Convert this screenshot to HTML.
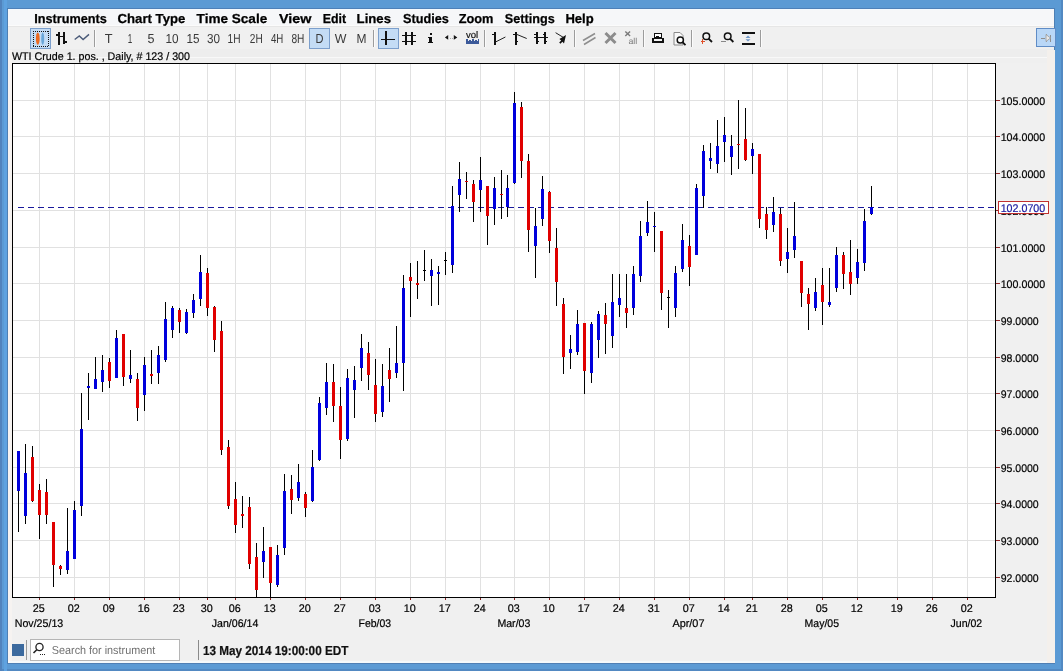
<!DOCTYPE html>
<html><head><meta charset="utf-8"><title>Chart</title>
<style>html,body{margin:0;padding:0;width:1063px;height:671px;overflow:hidden;background:#5b9ad4}svg{display:block;will-change:transform}text{shape-rendering:auto}</style>
</head><body><svg width="1063" height="671" viewBox="0 0 1063 671" font-family='"Liberation Sans", sans-serif' shape-rendering="crispEdges" text-rendering="geometricPrecision"><rect x="0" y="0" width="1063" height="671" fill="#5b9ad4"/><rect x="8" y="8" width="1047" height="1" fill="#4d80b8"/><rect x="8" y="9" width="1047" height="654" fill="#f0f0f0"/><rect x="8" y="663" width="1047" height="1" fill="#4f7fb4"/><rect x="0" y="669" width="1063" height="2" fill="#5289c2"/><rect x="1061" y="0" width="2" height="671" fill="#5289c2"/><rect x="8" y="661" width="1047" height="2" fill="#f4f8fa"/><defs><linearGradient id="mb" x1="0" y1="0" x2="0" y2="1"><stop offset="0" stop-color="#fbfcfd"/><stop offset="1" stop-color="#f3f4f6"/></linearGradient><linearGradient id="tb" x1="0" y1="0" x2="0" y2="1"><stop offset="0" stop-color="#ebebeb"/><stop offset="0.3" stop-color="#f0f0f0"/><stop offset="1" stop-color="#ededed"/></linearGradient></defs><rect x="8" y="9" width="1047" height="1" fill="#f4f9fd"/><rect x="8" y="10" width="1047" height="15" fill="#f6f7f9"/><rect x="8" y="25" width="1047" height="1" fill="#fbfbfb"/><rect x="8" y="26" width="1047" height="1" fill="#e6e6e6"/><rect x="8" y="27" width="1047" height="22" fill="#f0f0f0"/><rect x="8" y="49" width="1047" height="8" fill="#ededed"/><rect x="8" y="57" width="1047" height="1" fill="#f8f8f8"/><rect x="8" y="58" width="1047" height="5" fill="#efefef"/><rect x="0" y="0" width="2" height="671" fill="#5183bd"/><rect x="4" y="0" width="3" height="671" fill="#5ea2e0"/><rect x="7" y="8" width="1" height="656" fill="#4d7fb4"/><rect x="1054" y="8" width="1" height="656" fill="#4d7fb4"/><rect x="1047" y="50" width="8" height="613" fill="#f4f0ec"/><rect x="8" y="50" width="4" height="611" fill="#f6f3f1"/><text x="34.3" y="22.6" font-size="13" font-weight="bold" fill="#000" text-anchor="start" textLength="72.6" lengthAdjust="spacingAndGlyphs" stroke="#000" stroke-width="0.25">Instruments</text><text x="117.6" y="22.6" font-size="13" font-weight="bold" fill="#000" text-anchor="start" textLength="67.7" lengthAdjust="spacingAndGlyphs" stroke="#000" stroke-width="0.25">Chart Type</text><text x="196.6" y="22.6" font-size="13" font-weight="bold" fill="#000" text-anchor="start" textLength="70.6" lengthAdjust="spacingAndGlyphs" stroke="#000" stroke-width="0.25">Time Scale</text><text x="279" y="22.6" font-size="13" font-weight="bold" fill="#000" text-anchor="start" textLength="32.5" lengthAdjust="spacingAndGlyphs" stroke="#000" stroke-width="0.25">View</text><text x="322.7" y="22.6" font-size="13" font-weight="bold" fill="#000" text-anchor="start" textLength="23.4" lengthAdjust="spacingAndGlyphs" stroke="#000" stroke-width="0.25">Edit</text><text x="356.6" y="22.6" font-size="13" font-weight="bold" fill="#000" text-anchor="start" textLength="34.4" lengthAdjust="spacingAndGlyphs" stroke="#000" stroke-width="0.25">Lines</text><text x="403.1" y="22.6" font-size="13" font-weight="bold" fill="#000" text-anchor="start" textLength="45.8" lengthAdjust="spacingAndGlyphs" stroke="#000" stroke-width="0.25">Studies</text><text x="458.7" y="22.6" font-size="13" font-weight="bold" fill="#000" text-anchor="start" textLength="34.8" lengthAdjust="spacingAndGlyphs" stroke="#000" stroke-width="0.25">Zoom</text><text x="504.8" y="22.6" font-size="13" font-weight="bold" fill="#000" text-anchor="start" textLength="49.9" lengthAdjust="spacingAndGlyphs" stroke="#000" stroke-width="0.25">Settings</text><text x="565.4" y="22.6" font-size="13" font-weight="bold" fill="#000" text-anchor="start" textLength="28.3" lengthAdjust="spacingAndGlyphs" stroke="#000" stroke-width="0.25">Help</text><rect x="30.5" y="28.5" width="20" height="20" fill="#c4dcf5" stroke="#7c9fcc" stroke-width="1"/><path d="M33 31h1v1h-1z M33 46h1v1h-1z M35 31h1v1h-1z M35 46h1v1h-1z M37 31h1v1h-1z M37 46h1v1h-1z M39 31h1v1h-1z M39 46h1v1h-1z M41 31h1v1h-1z M41 46h1v1h-1z M43 31h1v1h-1z M43 46h1v1h-1z M45 31h1v1h-1z M45 46h1v1h-1z M47 31h1v1h-1z M47 46h1v1h-1z M33 31h1v1h-1z M48 31h1v1h-1z M33 33h1v1h-1z M48 33h1v1h-1z M33 35h1v1h-1z M48 35h1v1h-1z M33 37h1v1h-1z M48 37h1v1h-1z M33 39h1v1h-1z M48 39h1v1h-1z M33 41h1v1h-1z M48 41h1v1h-1z M33 43h1v1h-1z M48 43h1v1h-1z M33 45h1v1h-1z M48 45h1v1h-1z" fill="#111"/><g shape-rendering="auto"><ellipse cx="37.8" cy="38.7" rx="1.9" ry="6.2" fill="#ec6a22"/><ellipse cx="42.7" cy="38.7" rx="1.5" ry="6.2" fill="#6aa6d8"/></g><path d="M58 32h1.5v12.5h-1.5z M56 34h2v1.5h-2z M59 35.5h4v1.2h-4z M63 31.5h1.5v12.5h-1.5z M64.5 41h2v1.5h-2z" fill="#111"/><path d="M74.7 39.5L79.3 36 83.1 39.6 89 34.4" stroke="#4a5a78" stroke-width="1.4" fill="none" shape-rendering="auto"/><rect x="94" y="30" width="1" height="17" fill="#9c9c9c"/><rect x="95" y="30" width="1" height="17" fill="#fbfbfb"/><rect x="309.5" y="28.5" width="20" height="20" fill="#c4dcf5" stroke="#7c9fcc" stroke-width="1"/><text x="104.8" y="42.6" font-size="13" font-weight="normal" fill="#3a3a3a" text-anchor="start" textLength="7.8" lengthAdjust="spacingAndGlyphs" >T</text><text x="127.8" y="42.6" font-size="13" font-weight="normal" fill="#3a3a3a" text-anchor="start" textLength="4.5" lengthAdjust="spacingAndGlyphs" >1</text><text x="147.6" y="42.6" font-size="13" font-weight="normal" fill="#3a3a3a" text-anchor="start" textLength="7" lengthAdjust="spacingAndGlyphs" >5</text><text x="165.5" y="42.6" font-size="13" font-weight="normal" fill="#3a3a3a" text-anchor="start" textLength="13.1" lengthAdjust="spacingAndGlyphs" >10</text><text x="186.4" y="42.6" font-size="13" font-weight="normal" fill="#3a3a3a" text-anchor="start" textLength="13" lengthAdjust="spacingAndGlyphs" >15</text><text x="207.1" y="42.6" font-size="13" font-weight="normal" fill="#3a3a3a" text-anchor="start" textLength="13" lengthAdjust="spacingAndGlyphs" >30</text><text x="227.6" y="42.6" font-size="13" font-weight="normal" fill="#3a3a3a" text-anchor="start" textLength="13" lengthAdjust="spacingAndGlyphs" >1H</text><text x="249.8" y="42.6" font-size="13" font-weight="normal" fill="#3a3a3a" text-anchor="start" textLength="12.9" lengthAdjust="spacingAndGlyphs" >2H</text><text x="270.9" y="42.6" font-size="13" font-weight="normal" fill="#3a3a3a" text-anchor="start" textLength="12.4" lengthAdjust="spacingAndGlyphs" >4H</text><text x="291.4" y="42.6" font-size="13" font-weight="normal" fill="#3a3a3a" text-anchor="start" textLength="13" lengthAdjust="spacingAndGlyphs" >8H</text><text x="315.6" y="42.6" font-size="13" font-weight="normal" fill="#3a3a3a" text-anchor="start" textLength="8" lengthAdjust="spacingAndGlyphs" >D</text><text x="334.7" y="42.6" font-size="13" font-weight="normal" fill="#3a3a3a" text-anchor="start" textLength="11.7" lengthAdjust="spacingAndGlyphs" >W</text><text x="356.6" y="42.6" font-size="13" font-weight="normal" fill="#3a3a3a" text-anchor="start" textLength="10" lengthAdjust="spacingAndGlyphs" >M</text><rect x="373" y="30" width="1" height="17" fill="#9c9c9c"/><rect x="374" y="30" width="1" height="17" fill="#fbfbfb"/><rect x="378.5" y="28.5" width="20" height="20" fill="#c4dcf5" stroke="#7c9fcc" stroke-width="1"/><path d="M385 31h1.6v14h-1.6z M381 38.6h14v1.6h-14z" fill="#111"/><path d="M405 32h1.6v13h-1.6z M411 32h1.6v13h-1.6z M402 34.6h14v1.6h-14z M402 40.6h14v1.6h-14z" fill="#111"/><path d="M429.5 33h2v2h-2z M428 36.5h3.6v5.5h1.6v1.3h-5.5v-1.3h1.6v-4.2h-1.3z" fill="#111"/><path d="M448.2 35.1v4.6l-3.3-2.3z M453.8 35.1v4.6l3.5-2.3z" fill="#111" shape-rendering="auto"/><rect x="449.5" y="38" width="1" height="1" fill="#aaa"/><rect x="452" y="38" width="1" height="1" fill="#aaa"/><text x="466" y="37.8" font-size="9.5" font-weight="normal" fill="#111" text-anchor="start" textLength="12.2" lengthAdjust="spacingAndGlyphs" stroke="#111" stroke-width="0.2">vol</text><path d="M466 39.2h1.5v2.2h1.5v-1.5h1.5v1.5h1.5v-2.2h1.5v2.2h1.5v-1.5h1.5v1.5h1v-2.2h1.2v4.6h-12.2z" fill="#3c5a9a"/><rect x="484" y="30" width="1" height="17" fill="#9c9c9c"/><rect x="485" y="30" width="1" height="17" fill="#fbfbfb"/><g fill="#111"><path d="M494 32h1.5v12.6h-1.5z M492 34h2v1.4h-2z M495.5 41h1.5v1.4h-1.5z"/><path d="M515 32h1.5v12.6h-1.5z M513 34h2v1.4h-2z M516.5 41h1.5v1.4h-1.5z"/><path d="M536 32h1.5v12.3h-1.5z M544.3 32h1.5v12.3h-1.5z M534.2 37h13.5v1.4h-13.5z M534.3 34h1.7v1.4h-1.7z M542.6 34h1.7v1.4h-1.7z M537.5 40.6h1.5v1.4h-1.5z M545.8 40.6h1.5v1.4h-1.5z"/></g><path d="M495.5 42L505.4 37 M516.3 34.2L526.7 38.5 M555.6 32.7L563.5 37.5" stroke="#222" stroke-width="1" fill="none" shape-rendering="auto"/><path d="M566 35l-2 8.5-1.6-1.8-2 2-1.2-1.2 2-2-1.8-1.6z" fill="#111" shape-rendering="auto"/><rect x="574" y="30" width="1" height="17" fill="#9c9c9c"/><rect x="575" y="30" width="1" height="17" fill="#fbfbfb"/><path d="M583 40.5l12-7M584 44.5l11.5-7" stroke="#8e8e8e" stroke-width="1.5" fill="none" shape-rendering="auto"/><path d="M605.5 33l10 10M615.5 33l-10 10" stroke="#8c8c8c" stroke-width="3" fill="none" shape-rendering="auto"/><path d="M625.3 31.5l4.8 4.6M630.1 31.5l-4.8 4.6" stroke="#7a7a7a" stroke-width="1.4" fill="none" shape-rendering="auto"/><text x="628.4" y="43.5" font-size="8.5" font-weight="normal" fill="#7a7a7a" text-anchor="start" textLength="8.8" lengthAdjust="spacingAndGlyphs" >all</text><rect x="643" y="30" width="1" height="17" fill="#9c9c9c"/><rect x="644" y="30" width="1" height="17" fill="#fbfbfb"/><path d="M654.5 33.5h7v4h-7z" fill="#fff" stroke="#111" stroke-width="1"/><path d="M652 37.5h11.5v5h-11.5z" fill="#111"/><path d="M653.5 38.8h8.5v2h-8.5z" fill="#f4f4f4"/><path d="M656 35.5h3v1h-3z" fill="#111"/><path d="M674 32.5h6l3 3v9.5h-9z" fill="#f8f8f8" stroke="#8a8a8a" stroke-width="1" shape-rendering="auto"/><circle cx="680.3" cy="40" r="3.1" fill="#fff" stroke="#111" stroke-width="1.5" shape-rendering="auto"/><path d="M682.5 42.2l3 3" stroke="#111" stroke-width="1.8" shape-rendering="auto"/><rect x="691" y="30" width="1" height="17" fill="#9c9c9c"/><rect x="692" y="30" width="1" height="17" fill="#fbfbfb"/><g shape-rendering="auto"><circle cx="706.3" cy="36.3" r="3.3" fill="none" stroke="#111" stroke-width="1.5"/><path d="M708.6 38.6l3.4 3.4" stroke="#111" stroke-width="1.8"/></g><path d="M700.5 41h4.5v1.2h-4.5z M702.2 39.3h1.2v4.5h-1.2z" fill="#e0502a"/><g shape-rendering="auto"><circle cx="727.7" cy="36.3" r="3.3" fill="none" stroke="#111" stroke-width="1.5"/><path d="M730 38.6l3.4 3.4" stroke="#111" stroke-width="1.8"/></g><path d="M720.6 41h5v1h-5z" fill="#888"/><path d="M741.5 32h13v1.6h-13z M741.5 43h13v1.6h-13z" fill="#111"/><path d="M748 35.5l-2.5 2.4h5z M748 41.6l-2.5-2.4h5z" fill="#6f97c8" shape-rendering="auto"/><rect x="760" y="30" width="1" height="17" fill="#9c9c9c"/><rect x="761" y="30" width="1" height="17" fill="#fbfbfb"/><rect x="1036.5" y="28.5" width="18.5" height="18" fill="#b9d7f7" stroke="#5f8cc6"/><path d="M1041 38h4 M1046 34v8 M1050.5 34.5v7" stroke="#8f8f8f" stroke-width="1" fill="none"/><path d="M1046 34.5l4.5 3.5-4.5 3.5z" fill="#e8e8e8" stroke="#9a9a9a" stroke-width="0.8" shape-rendering="auto"/><text x="12" y="59.5" font-size="11" font-weight="normal" fill="#000" text-anchor="start" textLength="178" lengthAdjust="spacingAndGlyphs" stroke="#000" stroke-width="0.2">WTI Crude 1. pos. , Daily, # 123 / 300</text><rect x="12" y="63" width="983" height="534" fill="#fff"/><path d="M39.5 63V597 M74.5 63V597 M109.5 63V597 M144.5 63V597 M179.5 63V597 M207.5 63V597 M235.5 63V597 M270.5 63V597 M305.5 63V597 M340.5 63V597 M375.5 63V597 M410.5 63V597 M445.5 63V597 M480.5 63V597 M514.5 63V597 M549.5 63V597 M584.5 63V597 M619.5 63V597 M654.5 63V597 M689.5 63V597 M724.5 63V597 M752.5 63V597 M787.5 63V597 M822.5 63V597 M857.5 63V597 M897.5 63V597 M932.5 63V597 M967.5 63V597 M12 577.5H995 M12 540.5H995 M12 503.5H995 M12 467.5H995 M12 430.5H995 M12 393.5H995 M12 357.5H995 M12 320.5H995 M12 283.5H995 M12 247.5H995 M12 210.5H995 M12 173.5H995 M12 136.5H995 M12 100.5H995" stroke="#e1e1e1" stroke-width="1" fill="none"/><path d="M18 207.5H995" stroke="#1a1a9c" stroke-width="1" stroke-dasharray="6,4"/><path d="M18.5 451V532 M25.5 444V524 M32.5 446V502 M39.5 484V539 M46.5 479V524 M53.5 522V587 M60.5 565V575 M67.5 508V574 M74.5 501V559 M81.5 393V516 M88.5 373V420 M95.5 357V389 M102.5 355V392 M109.5 358V388 M116.5 330V378 M123.5 334V386 M130.5 350V383 M137.5 373V421 M144.5 357V411 M151.5 350V384 M158.5 346V384 M165.5 302V362 M172.5 306V338 M179.5 308V333 M186.5 309V334 M193.5 294V318 M200.5 255V306 M207.5 268V316 M214.5 306V352 M221.5 321V455 M228.5 440V509 M235.5 482V533 M242.5 496V528 M249.5 497V569 M256.5 543V598 M263.5 527V578 M270.5 547V598 M277.5 545V587 M284.5 474V555 M291.5 475V514 M298.5 464V501 M305.5 492V517 M312.5 450V502 M319.5 397V461 M326.5 363V415 M333.5 364V422 M340.5 387V459 M347.5 369V441 M354.5 366V418 M361.5 334V381 M368.5 342V390 M375.5 359V422 M382.5 364V417 M389.5 348V402 M396.5 326V378 M403.5 275V391 M410.5 263V317 M417.5 261V299 M424.5 250V281 M431.5 259V306 M438.5 266V305 M445.5 252V275 M452.5 186V273 M459.5 162V212 M466.5 172V199 M473.5 180V222 M480.5 157V212 M487.5 186V245 M494.5 177V225 M501.5 170V219 M507.5 175V217 M514.5 92V184 M521.5 102V178 M528.5 154V252 M535.5 208V278 M542.5 176V226 M549.5 191V253 M556.5 228V306 M563.5 298V374 M570.5 335V369 M577.5 310V355 M584.5 323V394 M591.5 322V383 M598.5 311V358 M605.5 303V354 M612.5 274V348 M619.5 274V317 M626.5 274V328 M633.5 266V315 M640.5 221V282 M647.5 201V236 M654.5 212V252 M661.5 231V310 M668.5 290V328 M675.5 266V317 M682.5 224V272 M689.5 235V286 M696.5 184V255 M703.5 145V208 M710.5 143V169 M717.5 120V173 M724.5 117V162 M731.5 135V175 M738.5 100V169 M745.5 108V161 M752.5 143V174 M759.5 154V228 M766.5 207V239 M773.5 197V232 M780.5 208V266 M787.5 228V273 M794.5 202V258 M801.5 261V307 M808.5 288V330 M815.5 278V311 M822.5 268V325 M829.5 268V307 M836.5 247V292 M843.5 252V289 M850.5 240V295 M857.5 249V284 M864.5 209V271 M871.5 186V215" stroke="#000" stroke-width="1" fill="none"/><path d="M17 451h3v40h-3z M24 473h3v43h-3z M66 551h3v19h-3z M73 510h3v49h-3z M80 429h3v77h-3z M87 386h3v2h-3z M94 379h3v10h-3z M101 370h3v12h-3z M115 338h3v40h-3z M129 375h3v4h-3z M143 365h3v30h-3z M157 355h3v18h-3z M164 319h3v41h-3z M171 308h3v22h-3z M185 312h3v21h-3z M192 300h3v13h-3z M199 272h3v27h-3z M262 551h3v11h-3z M276 555h3v30h-3z M283 491h3v57h-3z M297 482h3v16h-3z M311 467h3v34h-3z M318 403h3v57h-3z M325 382h3v26h-3z M346 378h3v61h-3z M353 380h3v10h-3z M360 348h3v20h-3z M381 386h3v26h-3z M395 363h3v10h-3z M402 288h3v75h-3z M430 270h3v6h-3z M437 272h3v2h-3z M451 206h3v59h-3z M458 179h3v16h-3z M479 180h3v10h-3z M493 188h3v21h-3z M506 188h3v19h-3z M513 103h3v80h-3z M534 226h3v20h-3z M541 189h3v30h-3z M569 349h3v4h-3z M576 324h3v28h-3z M590 324h3v49h-3z M597 314h3v26h-3z M611 302h3v34h-3z M618 298h3v7h-3z M632 274h3v34h-3z M639 236h3v40h-3z M646 222h3v11h-3z M653 226h3v1h-3z M674 273h3v35h-3z M681 240h3v29h-3z M695 188h3v67h-3z M702 151h3v45h-3z M709 158h3v3h-3z M716 146h3v18h-3z M723 135h3v7h-3z M730 146h3v11h-3z M751 149h3v7h-3z M772 212h3v13h-3z M786 252h3v7h-3z M793 236h3v14h-3z M814 292h3v16h-3z M828 302h3v3h-3z M835 255h3v33h-3z M856 262h3v16h-3z M863 221h3v42h-3z M870 207h3v7h-3z" fill="#0000dc"/><path d="M31 457h3v44h-3z M38 490h3v25h-3z M45 492h3v23h-3z M52 522h3v43h-3z M59 566h3v3h-3z M108 362h3v19h-3z M122 334h3v43h-3z M136 379h3v29h-3z M150 374h3v2h-3z M178 310h3v12h-3z M206 273h3v35h-3z M213 307h3v33h-3z M220 331h3v119h-3z M227 447h3v59h-3z M234 499h3v26h-3z M241 514h3v2h-3z M248 507h3v57h-3z M255 557h3v33h-3z M269 547h3v36h-3z M290 489h3v11h-3z M304 494h3v14h-3z M332 382h3v24h-3z M339 406h3v34h-3z M367 353h3v22h-3z M374 385h3v29h-3z M388 370h3v9h-3z M409 277h3v4h-3z M416 283h3v2h-3z M465 181h3v1h-3z M472 184h3v18h-3z M486 186h3v30h-3z M500 194h3v1h-3z M520 107h3v54h-3z M527 161h3v69h-3z M548 192h3v49h-3z M555 248h3v34h-3z M562 304h3v53h-3z M583 323h3v48h-3z M604 315h3v9h-3z M625 308h3v5h-3z M660 231h3v62h-3z M688 246h3v21h-3z M737 144h3v1h-3z M744 139h3v21h-3z M758 154h3v65h-3z M765 214h3v16h-3z M779 214h3v47h-3z M800 261h3v32h-3z M807 294h3v10h-3z M821 285h3v17h-3z M842 255h3v19h-3z M849 272h3v12h-3z" fill="#e00000"/><path d="M423 270h3v1h-3z M444 260h3v1h-3z M667 297h3v1h-3z" fill="#000"/><rect x="12.5" y="63.5" width="983" height="534" fill="none" stroke="#000" stroke-width="1"/><path d="M39.5 598v2 M74.5 598v2 M109.5 598v2 M144.5 598v2 M179.5 598v2 M207.5 598v2 M235.5 598v2 M270.5 598v2 M305.5 598v2 M340.5 598v2 M375.5 598v2 M410.5 598v2 M445.5 598v2 M480.5 598v2 M514.5 598v2 M549.5 598v2 M584.5 598v2 M619.5 598v2 M654.5 598v2 M689.5 598v2 M724.5 598v2 M752.5 598v2 M787.5 598v2 M822.5 598v2 M857.5 598v2 M897.5 598v2 M932.5 598v2 M967.5 598v2" stroke="#802020" stroke-width="1"/><path d="M996 577.5h4 M996 540.5h4 M996 503.5h4 M996 467.5h4 M996 430.5h4 M996 393.5h4 M996 357.5h4 M996 320.5h4 M996 283.5h4 M996 247.5h4 M996 210.5h4 M996 173.5h4 M996 136.5h4 M996 100.5h4" stroke="#902828" stroke-width="1"/><text x="1000.7" y="581.5" font-size="11" font-weight="normal" fill="#000" text-anchor="start" textLength="38" lengthAdjust="spacingAndGlyphs" stroke="#000" stroke-width="0.2">92.0000</text><text x="1000.7" y="544.5" font-size="11" font-weight="normal" fill="#000" text-anchor="start" textLength="38" lengthAdjust="spacingAndGlyphs" stroke="#000" stroke-width="0.2">93.0000</text><text x="1000.7" y="507.5" font-size="11" font-weight="normal" fill="#000" text-anchor="start" textLength="38" lengthAdjust="spacingAndGlyphs" stroke="#000" stroke-width="0.2">94.0000</text><text x="1000.7" y="471.5" font-size="11" font-weight="normal" fill="#000" text-anchor="start" textLength="38" lengthAdjust="spacingAndGlyphs" stroke="#000" stroke-width="0.2">95.0000</text><text x="1000.7" y="434.5" font-size="11" font-weight="normal" fill="#000" text-anchor="start" textLength="38" lengthAdjust="spacingAndGlyphs" stroke="#000" stroke-width="0.2">96.0000</text><text x="1000.7" y="397.5" font-size="11" font-weight="normal" fill="#000" text-anchor="start" textLength="38" lengthAdjust="spacingAndGlyphs" stroke="#000" stroke-width="0.2">97.0000</text><text x="1000.7" y="361.5" font-size="11" font-weight="normal" fill="#000" text-anchor="start" textLength="38" lengthAdjust="spacingAndGlyphs" stroke="#000" stroke-width="0.2">98.0000</text><text x="1000.7" y="324.5" font-size="11" font-weight="normal" fill="#000" text-anchor="start" textLength="38" lengthAdjust="spacingAndGlyphs" stroke="#000" stroke-width="0.2">99.0000</text><text x="1000.7" y="287.5" font-size="11" font-weight="normal" fill="#000" text-anchor="start" textLength="44.5" lengthAdjust="spacingAndGlyphs" stroke="#000" stroke-width="0.2">100.0000</text><text x="1000.7" y="251.5" font-size="11" font-weight="normal" fill="#000" text-anchor="start" textLength="44.5" lengthAdjust="spacingAndGlyphs" stroke="#000" stroke-width="0.2">101.0000</text><text x="1000.7" y="214.5" font-size="11" font-weight="normal" fill="#000" text-anchor="start" textLength="44.5" lengthAdjust="spacingAndGlyphs" stroke="#000" stroke-width="0.2">102.0000</text><text x="1000.7" y="177.5" font-size="11" font-weight="normal" fill="#000" text-anchor="start" textLength="44.5" lengthAdjust="spacingAndGlyphs" stroke="#000" stroke-width="0.2">103.0000</text><text x="1000.7" y="140.5" font-size="11" font-weight="normal" fill="#000" text-anchor="start" textLength="44.5" lengthAdjust="spacingAndGlyphs" stroke="#000" stroke-width="0.2">104.0000</text><text x="1000.7" y="104.5" font-size="11" font-weight="normal" fill="#000" text-anchor="start" textLength="44.5" lengthAdjust="spacingAndGlyphs" stroke="#000" stroke-width="0.2">105.0000</text><rect x="998.5" y="201.5" width="50" height="12" fill="#fff" stroke="#c03030"/><text x="1000.7" y="211.5" font-size="11" font-weight="normal" fill="#1a1aa0" text-anchor="start" textLength="44.5" lengthAdjust="spacingAndGlyphs" stroke="#1a1aa0" stroke-width="0.2">102.0700</text><text x="38.8" y="612" font-size="11" font-weight="normal" fill="#000" text-anchor="middle" textLength="12" lengthAdjust="spacingAndGlyphs" stroke="#000" stroke-width="0.2">25</text><text x="73.8" y="612" font-size="11" font-weight="normal" fill="#000" text-anchor="middle" textLength="12" lengthAdjust="spacingAndGlyphs" stroke="#000" stroke-width="0.2">02</text><text x="108.8" y="612" font-size="11" font-weight="normal" fill="#000" text-anchor="middle" textLength="12" lengthAdjust="spacingAndGlyphs" stroke="#000" stroke-width="0.2">09</text><text x="143.8" y="612" font-size="11" font-weight="normal" fill="#000" text-anchor="middle" textLength="12" lengthAdjust="spacingAndGlyphs" stroke="#000" stroke-width="0.2">16</text><text x="178.8" y="612" font-size="11" font-weight="normal" fill="#000" text-anchor="middle" textLength="12" lengthAdjust="spacingAndGlyphs" stroke="#000" stroke-width="0.2">23</text><text x="206.8" y="612" font-size="11" font-weight="normal" fill="#000" text-anchor="middle" textLength="12" lengthAdjust="spacingAndGlyphs" stroke="#000" stroke-width="0.2">30</text><text x="234.8" y="612" font-size="11" font-weight="normal" fill="#000" text-anchor="middle" textLength="12" lengthAdjust="spacingAndGlyphs" stroke="#000" stroke-width="0.2">06</text><text x="269.8" y="612" font-size="11" font-weight="normal" fill="#000" text-anchor="middle" textLength="12" lengthAdjust="spacingAndGlyphs" stroke="#000" stroke-width="0.2">13</text><text x="304.8" y="612" font-size="11" font-weight="normal" fill="#000" text-anchor="middle" textLength="12" lengthAdjust="spacingAndGlyphs" stroke="#000" stroke-width="0.2">20</text><text x="339.8" y="612" font-size="11" font-weight="normal" fill="#000" text-anchor="middle" textLength="12" lengthAdjust="spacingAndGlyphs" stroke="#000" stroke-width="0.2">27</text><text x="374.8" y="612" font-size="11" font-weight="normal" fill="#000" text-anchor="middle" textLength="12" lengthAdjust="spacingAndGlyphs" stroke="#000" stroke-width="0.2">03</text><text x="409.8" y="612" font-size="11" font-weight="normal" fill="#000" text-anchor="middle" textLength="12" lengthAdjust="spacingAndGlyphs" stroke="#000" stroke-width="0.2">10</text><text x="444.8" y="612" font-size="11" font-weight="normal" fill="#000" text-anchor="middle" textLength="12" lengthAdjust="spacingAndGlyphs" stroke="#000" stroke-width="0.2">17</text><text x="479.8" y="612" font-size="11" font-weight="normal" fill="#000" text-anchor="middle" textLength="12" lengthAdjust="spacingAndGlyphs" stroke="#000" stroke-width="0.2">24</text><text x="513.8" y="612" font-size="11" font-weight="normal" fill="#000" text-anchor="middle" textLength="12" lengthAdjust="spacingAndGlyphs" stroke="#000" stroke-width="0.2">03</text><text x="548.8" y="612" font-size="11" font-weight="normal" fill="#000" text-anchor="middle" textLength="12" lengthAdjust="spacingAndGlyphs" stroke="#000" stroke-width="0.2">10</text><text x="583.8" y="612" font-size="11" font-weight="normal" fill="#000" text-anchor="middle" textLength="12" lengthAdjust="spacingAndGlyphs" stroke="#000" stroke-width="0.2">17</text><text x="618.8" y="612" font-size="11" font-weight="normal" fill="#000" text-anchor="middle" textLength="12" lengthAdjust="spacingAndGlyphs" stroke="#000" stroke-width="0.2">24</text><text x="653.8" y="612" font-size="11" font-weight="normal" fill="#000" text-anchor="middle" textLength="12" lengthAdjust="spacingAndGlyphs" stroke="#000" stroke-width="0.2">31</text><text x="688.8" y="612" font-size="11" font-weight="normal" fill="#000" text-anchor="middle" textLength="12" lengthAdjust="spacingAndGlyphs" stroke="#000" stroke-width="0.2">07</text><text x="723.8" y="612" font-size="11" font-weight="normal" fill="#000" text-anchor="middle" textLength="12" lengthAdjust="spacingAndGlyphs" stroke="#000" stroke-width="0.2">14</text><text x="751.8" y="612" font-size="11" font-weight="normal" fill="#000" text-anchor="middle" textLength="12" lengthAdjust="spacingAndGlyphs" stroke="#000" stroke-width="0.2">21</text><text x="786.8" y="612" font-size="11" font-weight="normal" fill="#000" text-anchor="middle" textLength="12" lengthAdjust="spacingAndGlyphs" stroke="#000" stroke-width="0.2">28</text><text x="821.8" y="612" font-size="11" font-weight="normal" fill="#000" text-anchor="middle" textLength="12" lengthAdjust="spacingAndGlyphs" stroke="#000" stroke-width="0.2">05</text><text x="856.8" y="612" font-size="11" font-weight="normal" fill="#000" text-anchor="middle" textLength="12" lengthAdjust="spacingAndGlyphs" stroke="#000" stroke-width="0.2">12</text><text x="896.8" y="612" font-size="11" font-weight="normal" fill="#000" text-anchor="middle" textLength="12" lengthAdjust="spacingAndGlyphs" stroke="#000" stroke-width="0.2">19</text><text x="931.8" y="612" font-size="11" font-weight="normal" fill="#000" text-anchor="middle" textLength="12" lengthAdjust="spacingAndGlyphs" stroke="#000" stroke-width="0.2">26</text><text x="966.8" y="612" font-size="11" font-weight="normal" fill="#000" text-anchor="middle" textLength="12" lengthAdjust="spacingAndGlyphs" stroke="#000" stroke-width="0.2">02</text><text x="14.7" y="626.8" font-size="11" font-weight="normal" fill="#000" text-anchor="start" textLength="48.6" lengthAdjust="spacingAndGlyphs" stroke="#000" stroke-width="0.2">Nov/25/13</text><text x="211.7" y="626.8" font-size="11" font-weight="normal" fill="#000" text-anchor="start" textLength="46.6" lengthAdjust="spacingAndGlyphs" stroke="#000" stroke-width="0.2">Jan/06/14</text><text x="358.5" y="626.8" font-size="11" font-weight="normal" fill="#000" text-anchor="start" textLength="32.5" lengthAdjust="spacingAndGlyphs" stroke="#000" stroke-width="0.2">Feb/03</text><text x="497.4" y="626.8" font-size="11" font-weight="normal" fill="#000" text-anchor="start" textLength="33" lengthAdjust="spacingAndGlyphs" stroke="#000" stroke-width="0.2">Mar/03</text><text x="672.4" y="626.8" font-size="11" font-weight="normal" fill="#000" text-anchor="start" textLength="32.1" lengthAdjust="spacingAndGlyphs" stroke="#000" stroke-width="0.2">Apr/07</text><text x="804.6" y="626.8" font-size="11" font-weight="normal" fill="#000" text-anchor="start" textLength="34.4" lengthAdjust="spacingAndGlyphs" stroke="#000" stroke-width="0.2">May/05</text><text x="950.6" y="626.8" font-size="11" font-weight="normal" fill="#000" text-anchor="start" textLength="31.6" lengthAdjust="spacingAndGlyphs" stroke="#000" stroke-width="0.2">Jun/02</text><rect x="12" y="644" width="12" height="12" fill="#3c6a9e"/><rect x="26" y="640" width="1" height="20" fill="#9a9a9a"/><rect x="30.5" y="639.5" width="149" height="21" fill="#fff" stroke="#b5b5b5"/><circle cx="39.5" cy="647" r="3.6" fill="none" stroke="#222" stroke-width="1.3" shape-rendering="auto"/><path d="M37 649.5l-3.5 3.5" stroke="#222" stroke-width="1.6" shape-rendering="auto"/><path d="M40 654.5h1M42 654.5h1M44 654.5h1" stroke="#222" stroke-width="1"/><text x="51.8" y="653.8" font-size="11.5" font-weight="normal" fill="#707070" text-anchor="start" textLength="103.4" lengthAdjust="spacingAndGlyphs" >Search for instrument</text><rect x="198" y="640" width="1" height="20" fill="#8a8a8a"/><text x="202.9" y="655.3" font-size="13" font-weight="bold" fill="#111" text-anchor="start" textLength="145.5" lengthAdjust="spacingAndGlyphs" stroke="#111" stroke-width="0.2">13 May 2014 19:00:00 EDT</text></svg></body></html>
